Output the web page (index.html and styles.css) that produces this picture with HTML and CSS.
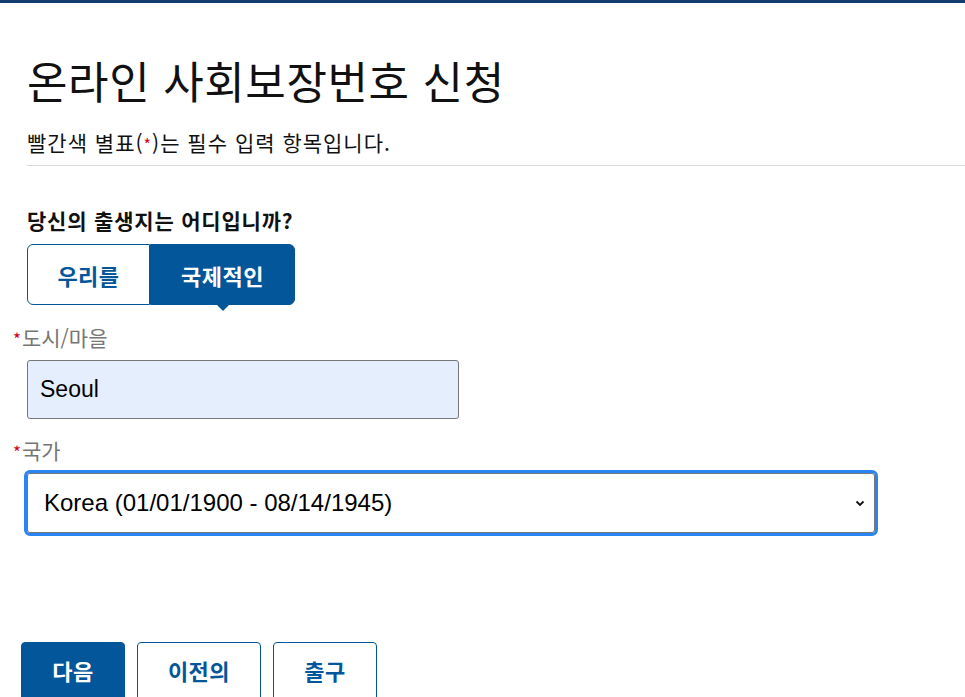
FILE: index.html
```html
<!DOCTYPE html>
<html lang="ko">
<head>
<meta charset="utf-8">
<title>온라인 사회보장번호 신청</title>
<link rel="stylesheet" href="styles.css">
</head>
<body>
<div class="topbar"></div>
<main class="page">
  <h1 class="title">온라인 사회보장번호 신청</h1>
  <p class="note">빨간색 별표(<span class="req">*</span>)는 필수 입력 항목입니다.</p>
  <hr class="rule">
  <form class="form">
    <p class="question">당신의 출생지는 어디입니까?</p>
    <div class="toggle">
      <button type="button" class="seg">우리를</button>
      <button type="button" class="seg active">국제적인</button>
    </div>
    <label class="label"><span class="star">*</span>도시/마을</label>
    <div class="input">Seoul</div>
    <label class="label label-country"><span class="star">*</span>국가</label>
    <div class="select">
      <span>Korea (01/01/1900 - 08/14/1945)</span>
      <svg class="chev" width="10" height="7" viewBox="0 0 10 7"><path d="M1.5 1.5 L5 5 L8.5 1.5" fill="none" stroke="#111" stroke-width="1.8"/></svg>
    </div>
    <div class="actions">
      <button type="button" class="btn primary">다음</button>
      <button type="button" class="btn">이전의</button>
      <button type="button" class="btn">출구</button>
    </div>
  </form>
</main>
</body>
</html>
```
FILE: styles.css
```css
* { box-sizing: border-box; }
html, body { margin: 0; padding: 0; background: #fff; }
body {
  font-family: "Liberation Sans", "Noto Sans CJK KR", sans-serif;
  color: #111;
  overflow: hidden;
  height: 697px;
}
.topbar { height: 3px; background: #123f6e; }
.page { padding-left: 27px; }
.title {
  margin: 49px 0 0;
  font-family: "Noto Sans CJK KR", sans-serif;
  font-weight: 400;
  font-size: 44px;
  line-height: 56px;
  letter-spacing: 0.6px;
}
.note {
  margin: 20px 0 0;
  font-family: "Noto Sans CJK KR", sans-serif;
  font-size: 21px;
  line-height: 28px;
  letter-spacing: 1px;
}
.req { color: #d0021b; font-size: 16px; }
.rule { margin: 7px 0 0; border: 0; border-top: 1px solid #d9d9d9; }
.form { display: flex; flex-direction: column; align-items: flex-start; }
.question {
  margin: 40px 0 0;
  font-family: "Noto Sans CJK KR", sans-serif;
  font-weight: 700;
  font-size: 21px;
  line-height: 28px;
  letter-spacing: 0.8px;
}
.toggle { display: flex; margin-top: 10px; }
.seg {
  position: relative;
  height: 61px;
  border: 1px solid #03569a;
  background: #fff;
  color: #03569a;
  font-family: "Noto Sans CJK KR", sans-serif;
  font-weight: 700;
  font-size: 22px;
  letter-spacing: 0.5px;
  padding: 0;
  width: 123px;
  border-radius: 6px 0 0 6px;
  white-space: nowrap;
}
.seg.active {
  width: 145px;
  background: #03569a;
  color: #fff;
  border-radius: 0 6px 6px 0;
}
.seg.active::after {
  content: "";
  position: absolute;
  left: 50%;
  bottom: -7px;
  margin-left: -7px;
  border-left: 7px solid transparent;
  border-right: 7px solid transparent;
  border-top: 7px solid #03569a;
}
.label {
  margin: 17px 0 0 -14px;
  font-family: "Noto Sans CJK KR", sans-serif;
  font-size: 21px;
  line-height: 30px;
  color: #767676;
}
.star { color: #d0021b; font-size: 17px; vertical-align: 0; margin-right: 1px; }
.input {
  margin-top: 6px;
  width: 432px;
  height: 59px;
  border: 1px solid #767676;
  border-radius: 3px;
  background: #e5eefd;
  font-size: 23px;
  line-height: 57px;
  padding-left: 12px;
  color: #000;
}
.label-country { margin-top: 16px; }
.select {
  margin: 3px 0 0 -3px;
  width: 854px;
  height: 66px;
  border: 3px solid #2a85f4;
  border-radius: 6px;
  display: flex;
  align-items: center;
  justify-content: space-between;
  padding: 0 10px 0 17px;
  font-size: 24px;
  color: #000;
  box-shadow: inset 0 0 0 1px #767676;
}
.chev { margin-top: 1px; }
.actions { display: flex; gap: 12px; margin: 106px 0 0 -6px; }
.btn {
  height: 62px;
  padding: 0 0 6px;
  border: 1px solid #03569a;
  border-radius: 4px;
  background: #fff;
  color: #03569a;
  font-family: "Noto Sans CJK KR", sans-serif;
  font-weight: 700;
  font-size: 22px;
  letter-spacing: 0.5px;
  line-height: 1;
  white-space: nowrap;
  display: flex;
  align-items: center;
  justify-content: center;
}
.btn:nth-child(2) { width: 124px; }
.btn:nth-child(3) { width: 104px; }
.btn.primary { width: 104px; background: #03569a; color: #fff; }
```
